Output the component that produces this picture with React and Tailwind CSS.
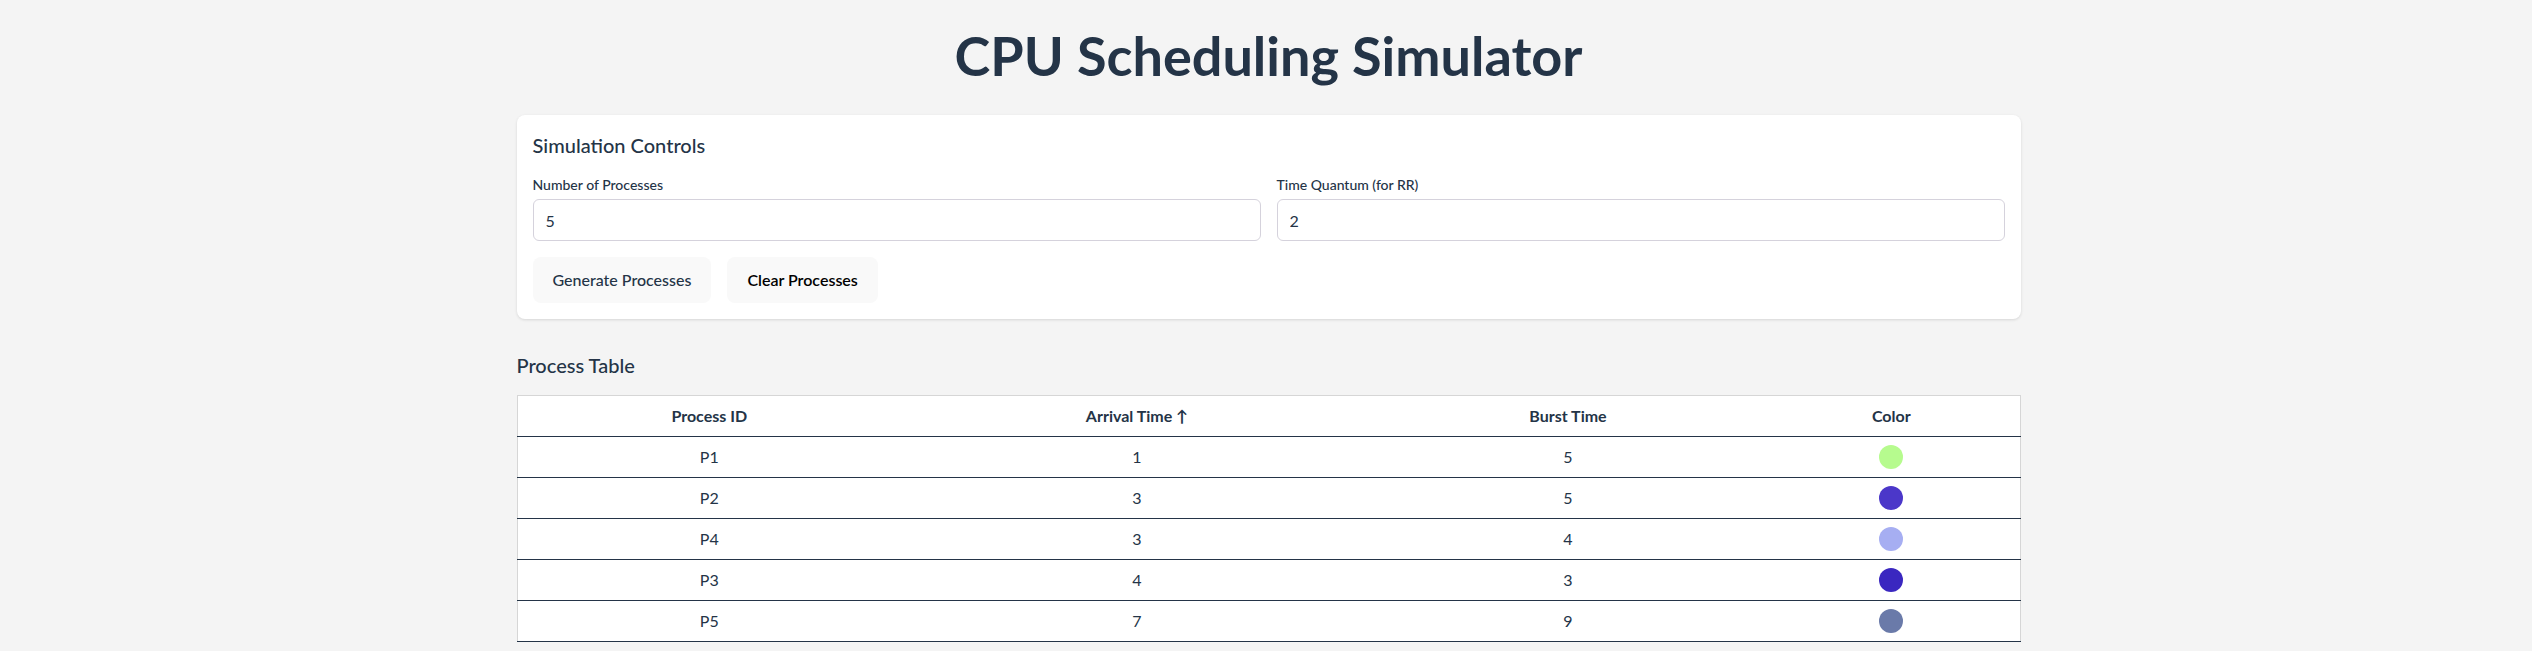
import React from 'react';

const processes = [
  { id: 'P1', arrival: 1, burst: 5, color: '#b6fb8e' },
  { id: 'P2', arrival: 3, burst: 5, color: '#4b37c9' },
  { id: 'P4', arrival: 3, burst: 4, color: '#a6aef2' },
  { id: 'P3', arrival: 4, burst: 3, color: '#3a27c0' },
  { id: 'P5', arrival: 7, burst: 9, color: '#6a7aa9' },
];

export default function App() {
  return (
    <div className="min-h-screen bg-[#f4f4f4] font-['Lato',sans-serif] text-[#243447]">
      <div className="flex justify-center pl-[5px]">
        <div className="w-[1504px] pt-[24px]">
          {/* Title */}
          <h1 className="text-center text-[54px] leading-[64px] font-bold">CPU Scheduling Simulator</h1>

          {/* Simulation Controls */}
          <section className="mt-[27px] bg-white rounded-lg shadow-[0_1px_3px_rgba(0,0,0,0.12)] p-4">
            <h2 className="text-xl leading-7 font-medium mb-4">Simulation Controls</h2>
            <div className="grid grid-cols-2 gap-4">
              <div>
                <label className="block text-sm leading-5 font-medium mb-1">Number of Processes</label>
                <input
                  type="text"
                  defaultValue="5"
                  className="w-full h-[42px] px-3 text-base border border-[#d5d2dc] rounded-md bg-white outline-none"
                />
              </div>
              <div>
                <label className="block text-sm leading-5 font-medium mb-1">Time Quantum (for RR)</label>
                <input
                  type="text"
                  defaultValue="2"
                  className="w-full h-[42px] px-3 text-base border border-[#d5d2dc] rounded-md bg-white outline-none"
                />
              </div>
            </div>
            <div className="flex gap-4 mt-4">
              <button className="h-[46px] px-5 rounded-lg bg-[#f9f9f9] text-base font-medium text-[#243447]">
                Generate Processes
              </button>
              <button className="h-[46px] px-5 rounded-lg bg-[#f9f9f9] text-base font-semibold text-black">
                Clear Processes
              </button>
            </div>
          </section>

          {/* Process Table */}
          <h2 className="mt-8 mb-4 text-xl leading-7 font-medium">Process Table</h2>
          <table className="w-full bg-white border border-[#d6d6d6] border-collapse text-base">
            <thead>
              <tr className="border-b border-[#243447]">
                <th className="w-[384px] h-[41px] font-bold">Process ID</th>
                <th className="w-[472px] h-[41px] font-bold">Arrival Time ↑</th>
                <th className="w-[390px] h-[41px] font-bold">Burst Time</th>
                <th className="h-[41px] font-bold">Color</th>
              </tr>
            </thead>
            <tbody>
              {processes.map((p) => (
                <tr key={p.id} className="border-b border-[#243447]">
                  <td className="h-[41px] text-center">{p.id}</td>
                  <td className="h-[41px] text-center">{p.arrival}</td>
                  <td className="h-[41px] text-center">{p.burst}</td>
                  <td className="h-[41px]">
                    <div className="mx-auto w-6 h-6 rounded-full" style={{ backgroundColor: p.color }} />
                  </td>
                </tr>
              ))}
            </tbody>
          </table>
        </div>
      </div>
    </div>
  );
}
